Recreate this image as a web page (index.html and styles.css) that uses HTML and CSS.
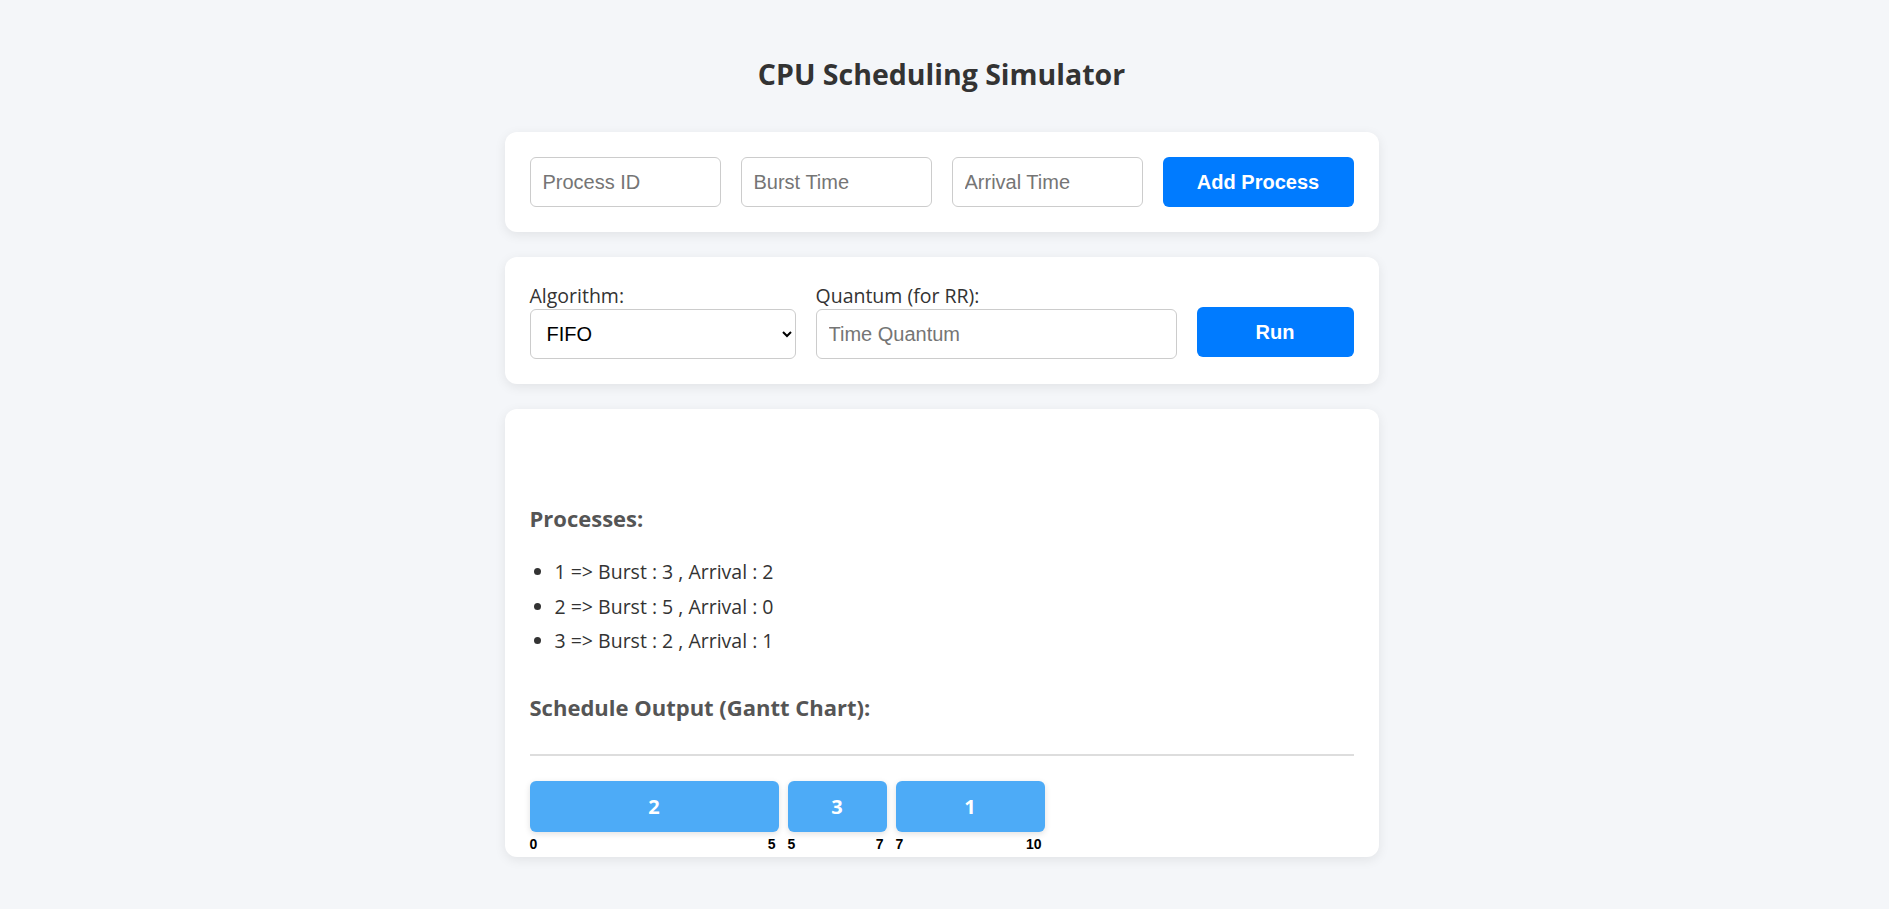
FILE: index.html
```html
<!DOCTYPE html>
<html lang="en">
<head>
<meta charset="UTF-8">
<title>CPU Scheduling Simulator</title>
<link rel="stylesheet" href="styles.css">
</head>
<body>
<div class="container">
  <h1 class="title">CPU Scheduling Simulator</h1>

  <div class="card">
    <div class="add-row">
      <input class="field" type="text" placeholder="Process ID">
      <input class="field" type="text" placeholder="Burst Time">
      <input class="field" type="text" placeholder="Arrival Time">
      <button class="btn">Add Process</button>
    </div>
  </div>

  <div class="card">
    <div class="run-row">
      <div class="group group-algo">
        <label class="label">Algorithm:</label>
        <select class="select">
          <option>FIFO</option>
          <option>SJF</option>
          <option>RR</option>
        </select>
      </div>
      <div class="group group-quantum">
        <label class="label">Quantum (for RR):</label>
        <input class="field" type="text" placeholder="Time Quantum">
      </div>
      <button class="btn btn-run">Run</button>
    </div>
  </div>

  <div class="card">
    <div class="result-space"></div>
    <h3 class="section-title">Processes:</h3>
    <ul class="proc-list">
      <li>1 =&gt; Burst : 3 , Arrival : 2</li>
      <li>2 =&gt; Burst : 5 , Arrival : 0</li>
      <li>3 =&gt; Burst : 2 , Arrival : 1</li>
    </ul>
    <h3 class="section-title section-gantt">Schedule Output (Gantt Chart):</h3>
    <div class="divider"></div>
    <div class="gantt">
      <div class="block" style="width:249px">2<span class="t t-start">0</span><span class="t t-end">5</span></div>
      <div class="block" style="width:99px">3<span class="t t-start">5</span><span class="t t-end">7</span></div>
      <div class="block" style="width:149px">1<span class="t t-start">7</span><span class="t t-end">10</span></div>
    </div>
  </div>
</div>
</body>
</html>
```

FILE: styles.css
```css
* { box-sizing: border-box; }

body {
  margin: 0;
  padding: 58px 0 40px;
  background: #f4f6f9;
  font-family: "Segoe UI", "Open Sans", "Noto Sans", sans-serif;
  color: #333;
}

.container {
  width: 874px;
  margin-left: calc(50% - 440px);
}

.title {
  margin: 0 0 41px;
  font-size: 28.5px;
  line-height: 33px;
  font-weight: 700;
  text-align: center;
  color: #333;
}

.card {
  background: #fff;
  border-radius: 12px;
  box-shadow: 0 3px 12px rgba(0, 0, 0, 0.08);
  padding: 25px;
  margin-bottom: 25px;
}

.add-row {
  display: grid;
  grid-template-columns: repeat(4, minmax(0, 1fr));
  gap: 20px;
}

.field {
  height: 50px;
  width: 100%;
  min-width: 0;
  border: 1px solid #ccc;
  border-radius: 6px;
  padding: 0 12px;
  font-family: "Liberation Sans", Arial, sans-serif;
  font-size: 20px;
  color: #333;
  background: #fff;
}

.field::placeholder { color: #757575; }

.btn {
  height: 50px;
  min-width: 0;
  padding: 0;
  border: none;
  border-radius: 6px;
  background: #007bff;
  color: #fff;
  font-family: "Liberation Sans", Arial, sans-serif;
  font-weight: 700;
  font-size: 20px;
}

.run-row {
  display: flex;
  gap: 20px;
  align-items: flex-end;
}

.group { display: flex; flex-direction: column; }
.group-algo { flex: 0 0 266px; }
.group-quantum { flex: 1 1 0; }

.label {
  font-size: 19.5px;
  line-height: 27px;
  color: #333;
}

.select {
  height: 50px;
  width: 100%;
  border: 1px solid #ccc;
  border-radius: 6px;
  padding: 0 12px;
  font-family: "Liberation Sans", Arial, sans-serif;
  font-size: 20px;
  color: #000;
  background: #fff;
}

.btn-run {
  flex: 0 0 157px;
  margin-bottom: 2px;
}

.result-space { height: 72px; }

.section-title {
  margin: 0;
  font-size: 22px;
  line-height: 24px;
  font-weight: 700;
  color: #555;
}

.proc-list {
  margin: 25px 0 0;
  padding-left: 25px;
}

.proc-list li {
  font-size: 19.5px;
  line-height: 34.5px;
  color: #333;
}

.section-gantt { margin-top: 36px; }

.divider {
  margin-top: 35px;
  border-top: 2px solid #ddd;
}

.gantt {
  display: flex;
  gap: 9px;
  margin-top: 25px;
}

.block {
  position: relative;
  height: 51px;
  background: #4dabf7;
  border-radius: 6px;
  box-shadow: 0 2px 6px rgba(0, 0, 0, 0.12);
  color: #fff;
  font-weight: 700;
  font-size: 20px;
  display: flex;
  align-items: center;
  justify-content: center;
}

.t {
  position: absolute;
  top: 56px;
  font-family: "Liberation Sans", Arial, sans-serif;
  font-size: 14px;
  line-height: 14px;
  font-weight: 700;
  color: #000;
}

.t-start { left: 0; }
.t-end { right: 3px; }
```
